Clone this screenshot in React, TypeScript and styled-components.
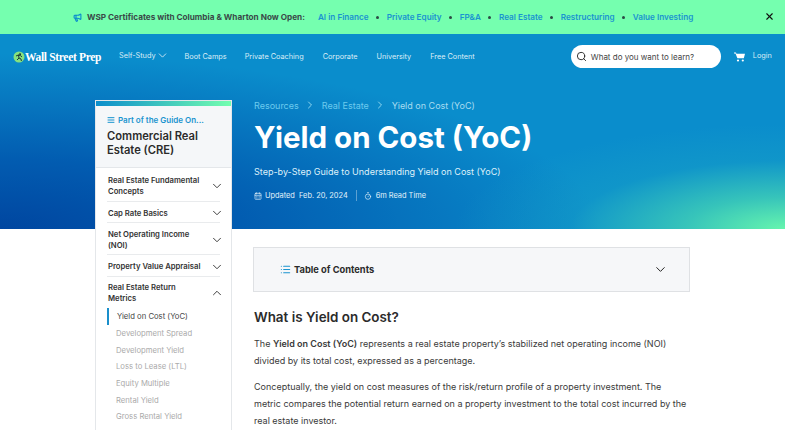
import React from "react";
import styled, { createGlobalStyle } from "styled-components";
import { ChevronDown, ChevronUp, ChevronRight, Search, X, Megaphone, CalendarDays, Timer, AlignJustify, List } from "lucide-react";

const Global = createGlobalStyle`
  html, body { margin: 0; padding: 0; background: #fff; }
  body { font-family: Inter, "Liberation Sans", sans-serif; height: 430px; overflow: hidden; }
  * { box-sizing: border-box; }
`;

const Banner = styled.div`
  height: 34px; background: #75ffaf; display: flex; align-items: center;
  padding-left: 73px; font-size: 8.2px; font-weight: 600; position: relative;
`;
const BannerIcon = styled(Megaphone)`color: #0b8dcd; margin-right: 5px; flex: none;`;
const BannerTitle = styled.span`color: #3a4a48; font-weight: 700; margin-right: 13px; white-space: nowrap;`;
const BannerLink = styled.span`color: #1a94cf; white-space: nowrap;`;
const Dot = styled.span`width: 3px; height: 3px; border-radius: 50%; background: #2c4a44; margin: 0 7.5px; flex: none;`;
const CloseBtn = styled(X)`position: absolute; right: 10px; top: 11px; color: #111;`;

const Shell = styled.div`
  background:
    radial-gradient(ellipse 330px 105px at 100% 100%, #66f5ae 0, rgba(70,215,180,.75) 30%, rgba(30,170,195,.3) 65%, rgba(10,141,204,0) 100%) top / 100% 195px no-repeat,
    radial-gradient(ellipse 600px 175px at 0 100%, #0046a0 0, rgba(0,80,170,.8) 40%, rgba(10,141,204,0) 100%) top / 100% 195px no-repeat,
    linear-gradient(#0a8dcc, #0a8dcc) top / 100% 195px no-repeat;
`;
const Nav = styled.nav`height: 45px; display: flex; align-items: center; padding: 0 0 0 13px; color: #dcedf7; font-size: 7.3px;`;
const Logo = styled.div`display: flex; align-items: center; gap: 0; font-family: "Liberation Serif", serif; font-weight: 700; font-size: 11.5px; color: #fff; width: 93px; flex: none; white-space: nowrap; letter-spacing: -0.33px;`;
const NavItem = styled.span<{ $ml: number; $up?: boolean }>`
  margin-left: ${p => p.$ml}px; white-space: nowrap; display: inline-flex; align-items: center; flex: none;
  ${p => p.$up ? "transform: translateY(-1px);" : ""}
`;
const SearchBox = styled.div`
  width: 150px; height: 23px; border-radius: 12px; background: #fff; display: flex; align-items: center; flex: none;
  margin-left: 96px; padding-left: 5px; color: #444; font-size: 8px; gap: 4px; white-space: nowrap;
`;
const CartIcon = styled.svg`margin-left: 13px; flex: none;`;

const Columns = styled.div`display: flex; align-items: flex-start; padding-left: 96px;`;
const Sidebar = styled.aside`
  width: 135px; margin-top: 22px; background: #fff; border-top: 5px solid transparent;
  border-image: linear-gradient(to right, #0a8dcc, #75ffaf) 1; border-left: 0; border-right: 0; flex: none;
  box-shadow: 0 0 0 1px #e4e7ea; height: 400px;
`;
const SideHead = styled.div`background: #f5f7f9; padding: 9px 11px 0; border-bottom: 1px solid #e4e7ea; height: 62px;`;
const PartOf = styled.div`display: flex; align-items: center; gap: 3px; color: #1a94cf; font-size: 8px; font-weight: 600; white-space: nowrap;`;
const SideTitle = styled.div`color: #2b2b2b; font-size: 11.2px; font-weight: 600; line-height: 14px; margin-top: 4px;`;
const SideBody = styled.div`padding: 0 11px;`;
const Section = styled.div<{ $h: number; $open?: boolean }>`
  height: ${p => p.$h}px; display: flex; align-items: center; justify-content: space-between;
  padding-top: ${p => p.$open ? 1 : 2}px; padding-left: 1px;
  border-bottom: ${p => p.$open ? "0" : "1.5px solid #e9ebed"}; color: #333; font-size: 7.7px; font-weight: 600; line-height: 11px;
`;
const SectionLabel = styled.span`width: 95px;`;
const SectionChevron = styled.span`display: flex; margin-right: -3.5px; color: #333;`;
const SubItem = styled.div<{ $active?: boolean }>`
  height: 16.7px; display: flex; align-items: center; font-size: 7.7px; white-space: nowrap; padding-top: 1px;
  padding-left: ${p => p.$active ? 8 : 9}px; color: ${p => p.$active ? "#444" : "#aaa"};
  border-left: ${p => p.$active ? "2px solid #1a8fcb" : "0"};
`;

const Main = styled.main`margin-left: 23px; width: 436px; flex: none;`;
const Crumbs = styled.div`display: flex; align-items: center; margin-top: 20px; font-size: 9px; color: #6ccbee; white-space: nowrap;`;
const CrumbSep = styled(ChevronRight)`margin: 0 5.5px; color: #8ed6f0; flex: none;`;
const CrumbLast = styled.span`color: #a8dcf0;`;
const Title = styled.h1`margin: 5px 0 0; font-size: 29.5px; line-height: 42px; font-weight: 700; color: #fff; white-space: nowrap;`;
const Sub = styled.div`margin-top: 8px; font-size: 9.03px; color: #dff1fa; white-space: nowrap;`;
const Meta = styled.div`display: flex; align-items: center; margin-top: 13px; height: 11px; font-size: 7.4px; color: #e4f3fa; white-space: nowrap;`;
const MetaIcon = styled.span<{ $gap: number }>`display: flex; margin-right: ${p => p.$gap}px;`;
const MetaDivider = styled.span`width: 1px; height: 11px; background: rgba(255,255,255,.35); margin: 0 7px 0 8px;`;
const Toc = styled.div`
  margin-top: 46px; margin-left: -1px; height: 45px; background: #f6f7f9; border: 1px solid #dfe1e4; display: flex; align-items: center;
  justify-content: space-between; padding: 0 21px 0 26px;
`;
const TocLeft = styled.div`display: flex; align-items: center; gap: 3px; font-size: 9.3px; font-weight: 700; color: #2b2b2b;`;
const H2 = styled.h2`margin: 16px 0 0; font-size: 13.4px; line-height: 18px; font-weight: 600; color: #2b2b2b;`;
const P = styled.p`margin: 9px 0 0; font-size: 9px; line-height: 17px; color: #3a3a3a; width: 436px; b { font-weight: 600; }`;

const LogoMark = () => (
  <svg width="12" height="12" viewBox="0 0 12 12" style={{ flex: "none" }}>
    <circle cx="6" cy="6" r="5.5" fill="#86e27e" />
    <path d="M6.8 2.4l1 .6-.6 1 -1-.5zM3 5l2.4-1 2 .6 1.6 1.2M5.4 4l.6 3-2 2M6 7l2 1 .4 2" stroke="#1d3b3a" strokeWidth="1" fill="none" />
  </svg>
);

const sections: [string, number][] = [
  ["Real Estate Fundamental Concepts", 34],
  ["Cap Rate Basics", 21],
  ["Net Operating Income (NOI)", 32],
  ["Property Value Appraisal", 22],
];
const subs = ["Development Spread", "Development Yield", "Loss to Lease (LTL)", "Equity Multiple", "Rental Yield", "Gross Rental Yield"];

export default function App() {
  return (
    <>
      <Global />
      <Banner>
        <BannerIcon size={9} strokeWidth={3} />
        <BannerTitle>WSP Certificates with Columbia &amp; Wharton Now Open:</BannerTitle>
        {["AI in Finance", "Private Equity", "FP&A", "Real Estate", "Restructuring", "Value Investing"].map((t, i) => (
          <React.Fragment key={t}>
            {i > 0 && <Dot />}
            <BannerLink>{t}</BannerLink>
          </React.Fragment>
        ))}
        <CloseBtn size={11} strokeWidth={2.4} />
      </Banner>
      <Shell>
        <Nav>
          <Logo><LogoMark />Wall Street Prep</Logo>
          <NavItem $ml={13} $up>Self-Study<ChevronDown size={13} strokeWidth={1.6} /></NavItem>
          <NavItem $ml={16}>Boot Camps</NavItem>
          <NavItem $ml={18}>Private Coaching</NavItem>
          <NavItem $ml={19}>Corporate</NavItem>
          <NavItem $ml={19}>University</NavItem>
          <NavItem $ml={19}>Free Content</NavItem>
          <SearchBox><Search size={11} color="#222" />What do you want to learn?</SearchBox>
          <CartIcon width="11" height="10" viewBox="0 0 11 10" aria-hidden>
            <path d="M0 .5h2l.4 1.2H11L9.8 6.2H3.4L1.5 1.5H0z" fill="#fff" />
            <circle cx="4" cy="8.5" r="1.1" fill="#fff" />
            <circle cx="8.8" cy="8.5" r="1.1" fill="#fff" />
          </CartIcon>
          <NavItem $ml={8} $up>Login</NavItem>
        </Nav>
        <Columns>
          <Sidebar>
            <SideHead>
              <PartOf><AlignJustify size={8} strokeWidth={3} />Part of the Guide On...</PartOf>
              <SideTitle>Commercial Real Estate (CRE)</SideTitle>
            </SideHead>
            <SideBody>
              {sections.map(([t, h]) => (
                <Section key={t} $h={h}>
                  <SectionLabel>{t}</SectionLabel>
                  <SectionChevron><ChevronDown size={14} strokeWidth={1.6} /></SectionChevron>
                </Section>
              ))}
              <Section $h={31} $open>
                <SectionLabel>Real Estate Return Metrics</SectionLabel>
                <SectionChevron><ChevronUp size={14} strokeWidth={1.6} /></SectionChevron>
              </Section>
              <SubItem $active>Yield on Cost (YoC)</SubItem>
              {subs.map(s => <SubItem key={s}>{s}</SubItem>)}
            </SideBody>
          </Sidebar>
          <Main>
            <Crumbs>Resources<CrumbSep size={12} />Real Estate<CrumbSep size={12} /><CrumbLast>Yield on Cost (YoC)</CrumbLast></Crumbs>
            <Title>Yield on Cost (YoC)</Title>
            <Sub>Step-by-Step Guide to Understanding Yield on Cost (YoC)</Sub>
            <Meta>
              <MetaIcon $gap={3}><CalendarDays size={8} /></MetaIcon>Updated&nbsp; Feb. 20, 2024
              <MetaDivider />
              <MetaIcon $gap={4}><Timer size={8} /></MetaIcon>6m Read Time
            </Meta>
            <Toc>
              <TocLeft><List size={11} color="#1a94cf" strokeWidth={2.4} />Table of Contents</TocLeft>
              <ChevronDown size={15} color="#222" strokeWidth={1.6} />
            </Toc>
            <H2>What is Yield on Cost?</H2>
            <P>The <b>Yield on Cost (YoC)</b> represents a real estate property’s stabilized net operating income (NOI) divided by its total cost, expressed as a percentage.</P>
            <P>Conceptually, the yield on cost measures of the risk/return profile of a property investment. The metric compares the potential return earned on a property investment to the total cost incurred by the real estate investor.</P>
          </Main>
        </Columns>
      </Shell>
    </>
  );
}
